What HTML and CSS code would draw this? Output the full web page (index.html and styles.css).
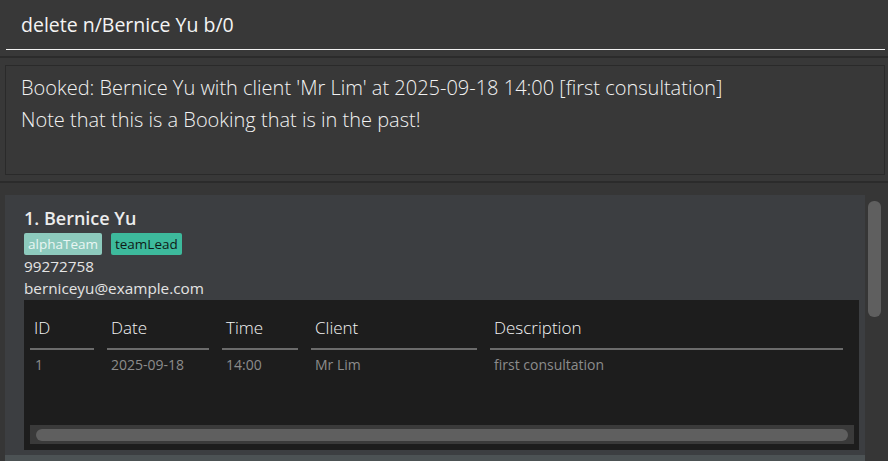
FILE: index.html
```html
<!DOCTYPE html>
<html>
<head>
<meta charset="utf-8">
<link rel="stylesheet" href="styles.css">
</head>
<body>
<div class="app">
  <div class="command-area">
    <div class="command-box">delete n/Bernice Yu b/0</div>
  </div>
  <div class="band"></div>
  <div class="result-area">
    <div class="result-box">
      <div class="result-line">Booked: Bernice Yu with client 'Mr Lim' at 2025-09-18 14:00 [first consultation]</div>
      <div class="result-line">Note that this is a Booking that is in the past!</div>
    </div>
  </div>
  <div class="band"></div>
  <div class="list-area">
    <div class="list">
      <div class="card">
        <div class="name">1. Bernice Yu</div>
        <div class="tags">
          <span class="tag tag-alpha">alphaTeam</span>
          <span class="tag tag-lead">teamLead</span>
        </div>
        <div class="info">99272758</div>
        <div class="info">berniceyu@example.com</div>
        <div class="table">
          <div class="thead">
            <div class="col c-id"><span class="th">ID</span></div>
            <div class="col c-date"><span class="th">Date</span></div>
            <div class="col c-time"><span class="th">Time</span></div>
            <div class="col c-client"><span class="th">Client</span></div>
            <div class="col c-desc"><span class="th">Description</span></div>
          </div>
          <div class="trow">
            <div class="col c-id">1</div>
            <div class="col c-date">2025-09-18</div>
            <div class="col c-time">14:00</div>
            <div class="col c-client">Mr Lim</div>
            <div class="col c-desc">first consultation</div>
          </div>
          <div class="hscroll"><div class="hthumb"></div></div>
        </div>
      </div>
      <div class="card card-odd"></div>
    </div>
    <div class="vscroll"><div class="vthumb"></div></div>
  </div>
</div>
</body>
</html>
```

FILE: styles.css
```css
html, body {
  margin: 0;
  padding: 0;
  background: #383838;
  overflow: hidden;
}
.app {
  width: 888px;
  height: 461px;
  display: flex;
  flex-direction: column;
  font-family: "Open Sans", "Noto Sans", sans-serif;
  overflow: hidden;
}
.command-area {
  height: 56px;
  padding: 0 3px 0 6px;
  box-sizing: border-box;
  flex: none;
}
.command-box {
  height: 50px;
  box-sizing: border-box;
  border-bottom: 1px solid #f2f2f2;
  padding: 13px 0 0 15px;
  color: #f4f4f4;
  font-size: 19.5px;
  line-height: 24px;
  font-weight: 400;
}
.band {
  height: 2px;
  background: #2b2b2b;
  flex: none;
}
.result-area {
  height: 123px;
  padding: 7px 3px 6px 5px;
  box-sizing: border-box;
  flex: none;
}
.result-box {
  height: 110px;
  box-sizing: border-box;
  border: 1px solid #2a2a2a;
  padding: 6px 0 0 15px;
  color: #f2f2f2;
  font-size: 20px;
  font-weight: 300;
}
.result-line {
  line-height: 32px;
  white-space: nowrap;
}
.list-area {
  flex: 1;
  display: flex;
  background: #363636;
  padding: 12px 0 0 5px;
  min-height: 0;
}
.list {
  width: 860px;
  flex: none;
  display: flex;
  flex-direction: column;
}
.card {
  background: #3c3e41;
  padding: 11px 6px 5px 19px;
  flex: none;
}
.card-odd {
  background: #4c5254;
  height: 20px;
  padding: 0;
}
.name {
  color: #ececec;
  font-weight: 600;
  font-size: 18px;
  line-height: 24px;
}
.tags {
  display: flex;
  gap: 9px;
  margin-top: 3px;
}
.tag {
  height: 22px;
  line-height: 22px;
  font-size: 13.5px;
  padding: 0 4px;
  border-radius: 2px;
}
.tag-alpha {
  background: #8dcabd;
  color: #e9f6f3;
}
.tag-lead {
  background: #3dba9c;
  color: #101a17;
}
.info {
  color: #e4e4e4;
  font-size: 15.3px;
  line-height: 22px;
}
.info + .info {
  margin-bottom: 1px;
}
.table {
  background: #1d1d1d;
  height: 150px;
  box-sizing: border-box;
  padding: 0 5px 6px 6px;
  display: flex;
  flex-direction: column;
}
.thead, .trow {
  display: flex;
  gap: 13px;
}
.thead {
  padding-top: 16px;
}
.thead .col {
  border-bottom: 2px solid #6b6b6b;
  height: 32px;
  color: #f4f4f4;
  font-size: 17px;
  font-weight: 300;
  line-height: 24px;
}
.th {
  padding-left: 4px;
}
.trow .col {
  color: #8c8c8c;
  font-size: 14px;
  padding-left: 4px;
  box-sizing: border-box;
  line-height: 18px;
  padding-top: 6px;
}
.c-id { width: 64px; }
.c-date { width: 102px; }
.c-time { width: 76px; }
.c-client { width: 166px; }
.c-desc { width: 353px; }
.trow .c-id { padding-left: 5px; }
.hscroll {
  margin-top: auto;
  height: 19px;
  background: #3a3a3a;
  padding: 4px 6px 3px 6px;
  box-sizing: border-box;
  width: 824px;
}
.hthumb {
  height: 12px;
  background: #5f5f5f;
  border-radius: 6px;
}
.vscroll {
  flex: 1;
  padding: 6px 7px 0 3px;
}
.vthumb {
  width: 13px;
  height: 116px;
  background: #5f5f5f;
  border-radius: 6px;
}
```
